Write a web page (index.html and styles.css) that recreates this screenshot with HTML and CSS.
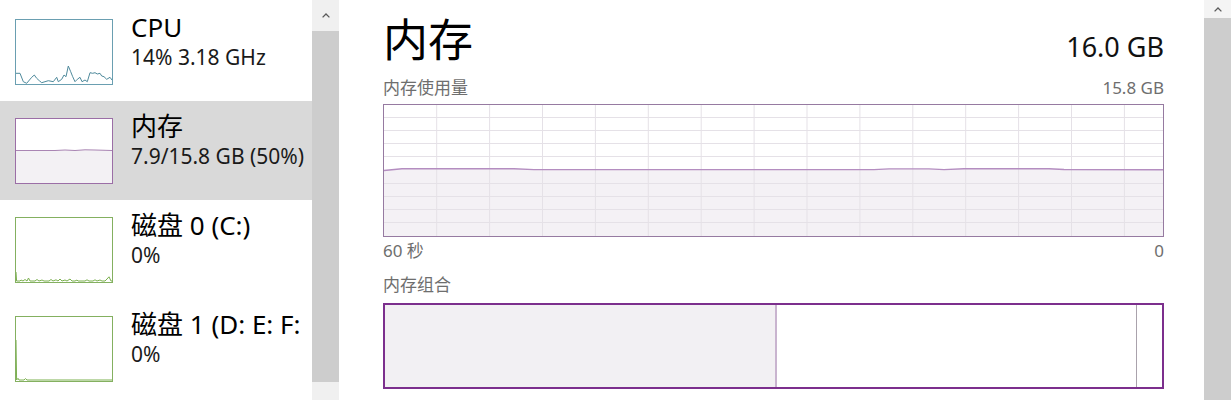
FILE: index.html
```html
<!DOCTYPE html>
<html lang="zh-CN">
<head>
<meta charset="utf-8">
<title>任务管理器 - 内存</title>
<link rel="stylesheet" href="styles.css">
</head>
<body>
<div class="app">
  <aside class="sidebar">
    <div class="proc-list">
      <div class="proc-item">
        <div class="thumb cpu">
          <svg viewBox="1 1 96 64" preserveAspectRatio="none">
            <polyline class="spark" points="0,54 1,54.3 5,54.3 8.3,62.7 11.7,64.3 16.7,58.3 19.3,56 21.7,59.3 24.3,61.7 26.7,63.7 30,62.7 33.3,61.7 38.3,62.7 41.7,58.3 43.3,62.7 46.7,60.3 49,56 51,57.7 53.3,47 55.7,52.7 57.7,57.7 60,62.7 62.3,60.3 65,58.3 67,62.7 70,61 72.3,62.7 75,53.7 77.7,54.3 80,53.7 82.3,55 85,54.3 86.7,57 89,57.7 91.7,60.3 95,58.3 97,61"/>
          </svg>
        </div>
        <div class="info">
          <div class="name">CPU</div>
          <div class="stat">14% 3.18 GHz</div>
        </div>
      </div>
      <div class="proc-item selected">
        <div class="thumb mem">
          <svg viewBox="1 1 96 64" preserveAspectRatio="none">
            <polygon class="fill" points="0,32.5 40,32.5 50,32 60,32.5 70,31.8 80,32 90,32.3 97,32.5 97,66 0,66"/>
            <polyline class="spark" points="0,32.5 40,32.5 50,32 60,32.5 70,31.8 80,32 90,32.3 97,32.5"/>
          </svg>
        </div>
        <div class="info">
          <div class="name">内存</div>
          <div class="stat">7.9/15.8 GB (50%)</div>
        </div>
      </div>
      <div class="proc-item">
        <div class="thumb disk">
          <svg viewBox="1 1 96 64" preserveAspectRatio="none">
            <polyline class="spark" points="1,55 1.6,64 5,64 6,63 8,64 10,62.5 12,64 13.5,61 15,64 20,64 22,62.5 24,64 27,63 29,64 34,64 36,62.5 38,64 41,62.8 43,64 45,62 47,64 50,63 52,64 55,62 57,64 60,64 62,63 63,64 70,64 72,62.8 74,64 78,64 80,62.8 82,64 85,63 87,64 90,64 92,62 94,59.8 96,64 97,64"/>
          </svg>
        </div>
        <div class="info">
          <div class="name">磁盘 0 (C:)</div>
          <div class="stat">0%</div>
        </div>
      </div>
      <div class="proc-item">
        <div class="thumb disk">
          <svg viewBox="1 1 96 64" preserveAspectRatio="none">
            <polyline class="spark" points="1,24 1.6,64 3,62.3 4,64 9,64 10.5,62.6 12,64 97,64"/>
          </svg>
        </div>
        <div class="info">
          <div class="name">磁盘 1 (D: E: F:</div>
          <div class="stat">0%</div>
        </div>
      </div>
    </div>
    <div class="scrollbar left">
      <div class="arrow"><svg width="8" height="5" viewBox="0 0 8 5"><polyline points="0.6,4.4 4,1 7.4,4.4"/></svg></div>
      <div class="bar"></div>
      <div class="track"></div>
    </div>
  </aside>

  <main class="detail">
    <header class="title-row">
      <h1 class="title">内存</h1>
      <span class="total">16.0 GB</span>
    </header>
    <div class="label-row">
      <span>内存使用量</span>
      <span>15.8 GB</span>
    </div>
    <div class="chart">
      <svg viewBox="0 0 779 131" preserveAspectRatio="none">
        <polygon class="area" points="0,65.5 18,63.8 130,63.8 150,64.6 490,64.6 505,63.9 545,63.9 560,64.6 580,63.8 665,63.8 680,64.5 779,64.8 779,131 0,131"/>
        <g class="grid">
          <line x1="52.7" y1="0" x2="52.7" y2="131"/>
          <line x1="105.6" y1="0" x2="105.6" y2="131"/>
          <line x1="158.5" y1="0" x2="158.5" y2="131"/>
          <line x1="211.4" y1="0" x2="211.4" y2="131"/>
          <line x1="264.3" y1="0" x2="264.3" y2="131"/>
          <line x1="317.2" y1="0" x2="317.2" y2="131"/>
          <line x1="370.1" y1="0" x2="370.1" y2="131"/>
          <line x1="423" y1="0" x2="423" y2="131"/>
          <line x1="475.9" y1="0" x2="475.9" y2="131"/>
          <line x1="528.8" y1="0" x2="528.8" y2="131"/>
          <line x1="581.7" y1="0" x2="581.7" y2="131"/>
          <line x1="634.6" y1="0" x2="634.6" y2="131"/>
          <line x1="687.5" y1="0" x2="687.5" y2="131"/>
          <line x1="740.4" y1="0" x2="740.4" y2="131"/>
          <line x1="0" y1="12.5" x2="779" y2="12.5"/>
          <line x1="0" y1="25.5" x2="779" y2="25.5"/>
          <line x1="0" y1="38.5" x2="779" y2="38.5"/>
          <line x1="0" y1="51.5" x2="779" y2="51.5"/>
          <line x1="0" y1="78.5" x2="779" y2="78.5"/>
          <line x1="0" y1="91.5" x2="779" y2="91.5"/>
          <line x1="0" y1="104.5" x2="779" y2="104.5"/>
          <line x1="0" y1="117.5" x2="779" y2="117.5"/>
        </g>
        <polyline class="usage" points="0,65.5 18,63.8 130,63.8 150,64.6 490,64.6 505,63.9 545,63.9 560,64.6 580,63.8 665,63.8 680,64.5 779,64.8"/>
      </svg>
    </div>
    <div class="label-row axis">
      <span>60 秒</span>
      <span>0</span>
    </div>
    <div class="label-row section">
      <span>内存组合</span>
    </div>
    <div class="composition">
      <div class="seg in-use"></div>
      <div class="seg standby"></div>
      <div class="seg free"></div>
    </div>
  </main>

  <div class="scrollbar right">
    <div class="arrow"><svg width="8" height="5" viewBox="0 0 8 5"><polyline points="0.6,4.4 4,1 7.4,4.4"/></svg></div>
    <div class="bar"></div>
  </div>
</div>
</body>
</html>
```

FILE: styles.css
```css
* {
  box-sizing: border-box;
}

html, body {
  margin: 0;
  padding: 0;
}

body {
  width: 1231px;
  height: 400px;
  overflow: hidden;
  background: #ffffff;
  font-family: "Noto Sans", "Noto Sans CJK SC", sans-serif;
  color: #000000;
}

.app {
  display: flex;
  height: 400px;
}

/* ---------- sidebar ---------- */
.sidebar {
  display: flex;
  flex: none;
  width: 339px;
  height: 400px;
}

.proc-list {
  width: 312px;
  flex: none;
  padding-top: 2px;
}

.proc-item {
  display: flex;
  height: 99px;
  padding: 10px 0 0 15px;
  overflow: hidden;
}

.proc-item.selected {
  background: #d9d9d9;
}

.thumb {
  flex: none;
  width: 98px;
  height: 66px;
  margin-top: 7px;
  border: 1px solid;
  background: #ffffff;
}

.thumb svg {
  display: block;
  width: 96px;
  height: 64px;
}

.thumb .spark {
  fill: none;
  stroke-width: 1;
  stroke-linejoin: round;
}

.thumb.cpu {
  border-color: #6a9fb1;
}

.thumb.cpu .spark {
  stroke: #4f8a9c;
}

.thumb.mem {
  border-color: #9b6ea6;
}

.thumb.mem .spark {
  stroke: #a985b3;
}

.thumb.mem .fill {
  fill: #f3f1f4;
}

.thumb.disk {
  border-color: #84b060;
}

.thumb.disk .spark {
  stroke: #7bb04f;
}

.info {
  margin-left: 18px;
  white-space: nowrap;
}

.name {
  font-size: 26px;
  line-height: 30px;
  color: #000000;
}

.stat {
  margin-top: 2px;
  font-size: 21px;
  line-height: 26px;
  color: #1a1a1a;
}

/* ---------- scrollbars ---------- */
.scrollbar {
  display: flex;
  flex-direction: column;
  flex: none;
  width: 27px;
  height: 400px;
  background: #f0f0f0;
}

.scrollbar .arrow {
  display: flex;
  align-items: center;
  justify-content: center;
  flex: none;
}

.scrollbar .arrow svg {
  display: block;
}

.scrollbar .arrow polyline {
  fill: none;
  stroke: #5a5a5a;
  stroke-width: 1.3;
}

.scrollbar .bar {
  background: #cdcdcd;
}

.scrollbar.left .arrow {
  height: 31px;
}

.scrollbar.left .bar {
  height: 351px;
}

.scrollbar.left .track {
  flex: 1;
}

.scrollbar.right {
  background: #f4f4f4;
}

.scrollbar.right .arrow {
  height: 18px;
}

.scrollbar.right .bar {
  flex: 1;
}

/* ---------- detail pane ---------- */
.detail {
  flex: 1;
  padding: 14px 40px 0 44px;
  min-width: 0;
}

.title-row {
  display: flex;
  justify-content: space-between;
  align-items: baseline;
  height: 52px;
}

.title {
  margin: 0;
  font-size: 45px;
  line-height: 52px;
  font-weight: normal;
  color: #000000;
}

.total {
  font-size: 27px;
  line-height: 52px;
  color: #111111;
}

.label-row {
  display: flex;
  justify-content: space-between;
  margin-top: 12px;
  font-size: 17px;
  line-height: 20px;
  color: #6e6e6e;
}

.chart {
  margin-top: 6px;
  height: 133px;
  border: 1px solid #967aa1;
  background: #ffffff;
}

.chart svg {
  display: block;
  width: 779px;
  height: 131px;
}

.chart .area {
  fill: #f4f1f5;
}

.chart .grid line {
  stroke: #e5e1e7;
  stroke-width: 1;
}

.chart .usage {
  fill: none;
  stroke: #b48dc0;
  stroke-width: 1.4;
}

.label-row.axis {
  margin-top: 4px;
}

.label-row.section {
  margin-top: 14px;
}

.composition {
  display: flex;
  margin-top: 8px;
  height: 86px;
  border: 2px solid #7c2f8d;
}

.seg {
  height: 100%;
}

.seg.in-use {
  width: 392px;
  background: #f2f0f3;
  border-right: 2px solid #c9b4cf;
}

.seg.standby {
  flex: 1;
  border-right: 1px solid #aaa2ac;
}

.seg.free {
  width: 25px;
}
```
